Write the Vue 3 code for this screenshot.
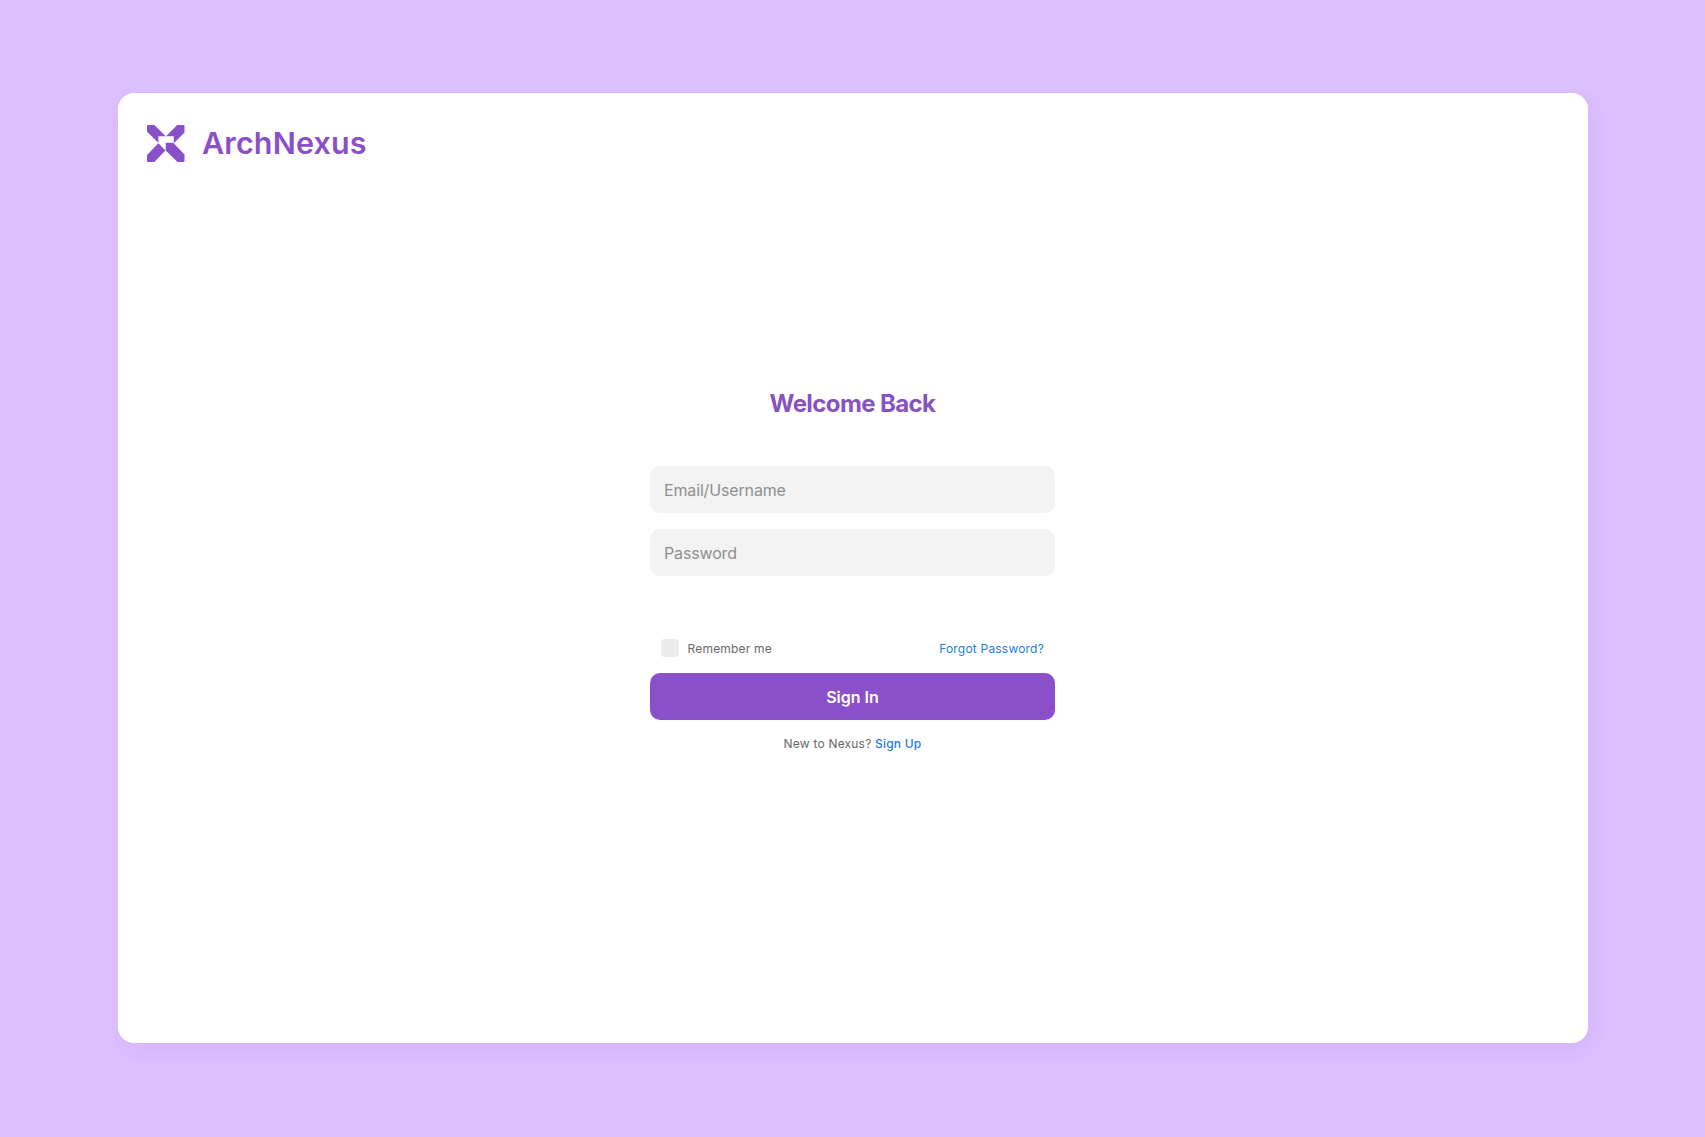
<template>
  <div class="page">
    <main class="login-card">
      <header class="brand">
        <svg class="brand-logo" viewBox="0 0 112 110" aria-hidden="true">
          <path d="M3 0H22L56 33H34V53L0 20V3Q0 0 3 0Z" />
          <path d="M90 0H109Q112 0 112 3V22L80 54V33H57Z" />
          <path d="M34 54L55 76L22 110H3Q0 110 0 107V89Z" />
          <path d="M56 53H78L112 88V107Q112 110 109 110H91L56 76Z" />
        </svg>
        <span class="brand-name">ArchNexus</span>
      </header>

      <form class="login-form" @submit.prevent>
        <h1 class="title">Welcome Back</h1>

        <div class="fields">
          <input v-model="username" class="field" type="text" placeholder="Email/Username" />
          <input v-model="password" class="field" type="password" placeholder="Password" />
        </div>

        <div class="options">
          <label class="remember">
            <input v-model="remember" class="checkbox" type="checkbox" />
            <span>Remember me</span>
          </label>
          <a class="link" href="#">Forgot Password?</a>
        </div>

        <button class="btn-submit" type="submit">Sign In</button>

        <p class="signup">New to Nexus? <a class="link strong" href="#">Sign Up</a></p>
      </form>
    </main>
  </div>
</template>

<script setup>
import { ref } from 'vue'

const username = ref('')
const password = ref('')
const remember = ref(false)
</script>

<style>
body {
  margin: 0;
  background: #dcbfff;
}
</style>

<style scoped>
.page {
  box-sizing: border-box;
  min-height: 100vh;
  padding: 0 0 1px;
  display: flex;
  align-items: center;
  justify-content: center;
  background: #dcbfff;
  font-family: Inter, "Liberation Sans", sans-serif;
}

.login-card {
  box-sizing: border-box;
  width: 1470px;
  height: 950px;
  padding: 31px 29.5px;
  background: #ffffff;
  border-radius: 16px;
  box-shadow: 5px 7px 16px rgba(136, 80, 220, 0.08);
}

.brand {
  display: flex;
  align-items: center;
  gap: 17.5px;
  height: 38px;
}

.brand-logo {
  width: 37.5px;
  height: 37px;
  margin-top: 1px;
  fill: #8a50c9;
}

.brand-name {
  font-size: 30.5px;
  font-weight: 600;
  line-height: 38px;
  letter-spacing: 0.15px;
  color: #8a50c9;
}

.login-form {
  width: 405px;
  margin: 224px auto 0;
}

.title {
  margin: 0;
  padding-top: 2px;
  font-size: 24px;
  font-weight: 700;
  line-height: 32px;
  letter-spacing: -0.6px;
  text-align: center;
  color: #8653c0;
}

.fields {
  display: flex;
  flex-direction: column;
  gap: 16px;
  margin-top: 46px;
}

.field {
  box-sizing: border-box;
  width: 100%;
  height: 47px;
  padding: 0 14px;
  border: none;
  border-radius: 10px;
  background: #f3f3f3;
  font-family: inherit;
  font-size: 16px;
  letter-spacing: -0.15px;
  color: #333333;
  outline: none;
}

.field::placeholder {
  color: #8f8f8f;
  opacity: 1;
}

.options {
  display: flex;
  align-items: center;
  justify-content: space-between;
  margin-top: 63px;
  padding: 0 11px;
  height: 18px;
  font-size: 12px;
  letter-spacing: 0.2px;
  color: #686868;
}

.remember {
  display: flex;
  align-items: center;
  gap: 8.5px;
}

.checkbox {
  appearance: none;
  width: 18px;
  height: 18px;
  margin: 0;
  border-radius: 4px;
  background: #ebebeb;
}

.checkbox:checked {
  background: #8a50c9;
}

.link {
  color: #1a7ee0;
  text-decoration: none;
}

.link.strong {
  font-weight: 500;
}

.btn-submit {
  display: block;
  width: 100%;
  height: 47px;
  margin-top: 16px;
  padding: 1px 0 0;
  border: none;
  border-radius: 10px;
  background: #8a50c9;
  font-family: inherit;
  font-size: 16px;
  font-weight: 600;
  color: #ffffff;
  cursor: pointer;
}

.signup {
  margin: 16px 0 0;
  font-size: 12px;
  line-height: 16px;
  letter-spacing: 0.2px;
  text-align: center;
  color: #686868;
}
</style>
